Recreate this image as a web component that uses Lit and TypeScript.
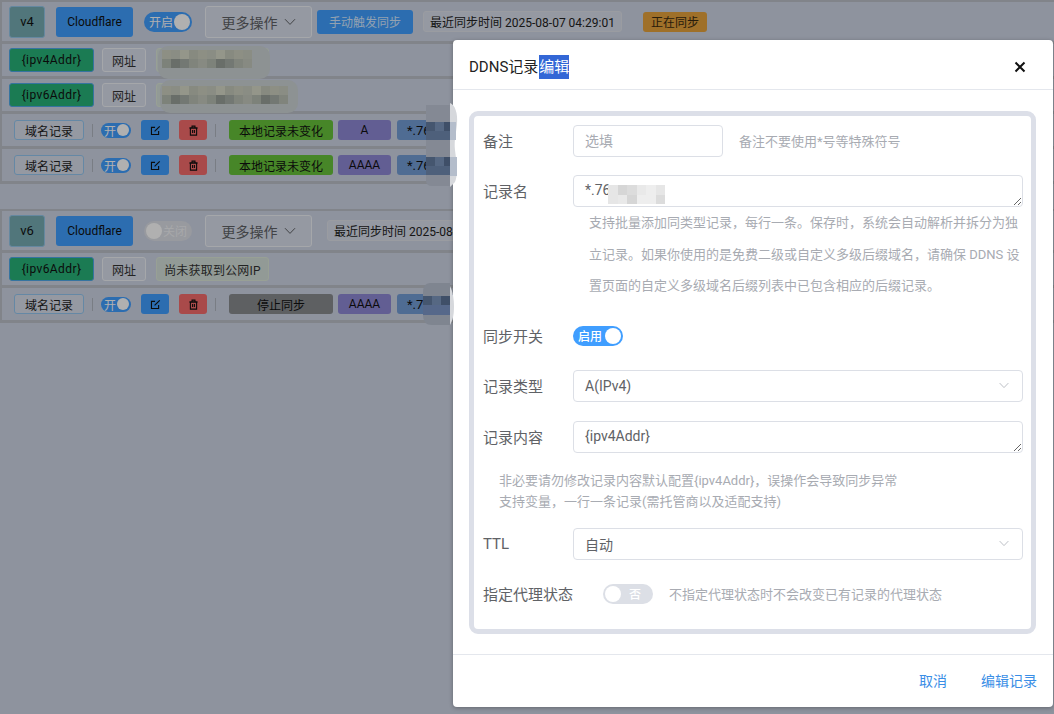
import { LitElement, html, css, svg } from "lit";
import { customElement } from "lit/decorators.js";

const editIcon = html`<svg class="ico" viewBox="0 0 12 12" fill="none" stroke="currentColor" stroke-width="1.2">
  <path d="M9.4 6.5V10.4H1.6V2.6H5.5" />
  <path d="M5 7L10.6 1.4" />
</svg>`;

const trashIcon = html`<svg class="ico" viewBox="0 0 12 12" fill="none" stroke="currentColor" stroke-width="1.2">
  <path d="M2.6 3.2H9.4V11H2.6Z" />
  <path d="M1.4 3.2H10.6M4.4 3V1.2H7.6V3M5 5.4V8.8M7 5.4V8.8" />
</svg>`;

const chevron = html`<svg class="chev" viewBox="0 0 12 8" fill="none" stroke="currentColor" stroke-width="1">
  <path d="M1 1.2L6 6.4L11 1.2" />
</svg>`;

// mosaic cells used to hide addresses, tones are just a repeating pattern
function cells(x: number, y: number, cols: number, rows: number, cell: number, tones: string[]) {
  const rects = [];
  for (let r = 0; r < rows; r++) {
    for (let c = 0; c < cols; c++) {
      const tone = tones[(c * 3 + r * 5 + ((c * r) % 4)) % tones.length];
      rects.push(svg`<rect x=${x + c * cell} y=${y + r * cell} width=${cell} height=${cell} fill=${tone} />`);
    }
  }
  return rects;
}

const greyTop = ["#8d8f84", "#878a80", "#94968a", "#8a8d84"];
const greyBottom = ["#7d827a", "#737873", "#878a82", "#696e69", "#80847c"];
const blueTones = ["#45566f", "#4e607b", "#3f4f68", "#566883"];
const lightTones = ["#e6e6e6", "#dcdcdc", "#eeeeee", "#d6d6d6", "#e9e9e9"];

@customElement("app-root")
export class AppRoot extends LitElement {
  static styles = css`
    :host {
      display: block;
      position: relative;
      width: 1054px;
      height: 714px;
      overflow: hidden;
      background: #ced5e5;
      font-family: Roboto, "Noto Sans CJK SC", sans-serif;
      font-size: 12px;
      color: #111;
    }

    /* ---- page behind the dialog ---- */
    .group {
      border: solid #bcc0c8;
      border-width: 2px 0 0 2px;
    }
    .group.second {
      margin-top: 25px;
    }
    .row {
      display: flex;
      align-items: center;
      border-bottom: 3px solid #bcc0c8;
      padding-left: 7px;
      height: 32px;
      white-space: nowrap;
    }
    .row.head {
      height: 39px;
    }
    .row.sub {
      padding-left: 12px;
    }
    .box {
      display: flex;
      align-items: center;
      justify-content: center;
      box-sizing: border-box;
      border-radius: 3px;
      flex: none;
    }
    .ver {
      width: 36px;
      height: 32px;
      background: #76abb2;
      border: 1px solid #93c6e8;
      font-size: 13px;
    }
    .cf {
      width: 77px;
      height: 30px;
      margin-left: 11px;
      background: #409eff;
    }
    .sw {
      position: relative;
      display: flex;
      align-items: center;
      box-sizing: border-box;
      flex: none;
      border-radius: 20px;
      color: #fff;
    }
    .sw .knob {
      position: absolute;
      border-radius: 50%;
      background: #fff;
    }
    .sw.main {
      width: 48px;
      height: 20px;
      margin-left: 11px;
      padding-left: 5px;
      background: #409eff;
    }
    .sw.main .knob {
      width: 16px;
      height: 16px;
      top: 2px;
      right: 2px;
    }
    .sw.main.off {
      background: #dcdfe6;
      padding-left: 19px;
      color: #f2f3f6;
    }
    .sw.main.off .knob {
      left: 2px;
      right: auto;
    }
    .more {
      width: 107px;
      height: 32px;
      margin-left: 13px;
      gap: 6px;
      background: #d8deeb;
      border: 1px solid #f0f2f6;
      font-size: 14px;
      color: #606266;
    }
    .more .chev {
      width: 12px;
      height: 8px;
      color: #606266;
    }
    .sync {
      width: 96px;
      height: 24px;
      margin-left: 5px;
      background: #409eff;
      color: #d5e9ff;
    }
    .time {
      width: 199px;
      height: 21px;
      margin-left: 10px;
      background: #d8deeb;
      border: 1px solid #dfe3ea;
      color: #222;
    }
    .time.shifted {
      margin-left: 15px;
    }
    .state {
      width: 64px;
      height: 20px;
      margin-left: 21px;
      background: #e6a23c;
      color: #3a2a10;
    }
    .var {
      width: 85px;
      height: 24px;
      background: #28b279;
      border: 1px solid #4fa8e8;
      letter-spacing: 0.4px;
    }
    .url {
      width: 44px;
      height: 24px;
      margin-left: 8px;
      background: #d8deeb;
      border: 1px solid #f0f2f6;
      color: #333;
    }
    .addr {
      width: 113px;
      height: 24px;
      margin-left: 10px;
      background: #d4e0da;
      border: 1px solid #dde8d8;
      color: #333;
      letter-spacing: 0.2px;
    }
    .addr.long {
      width: 140px;
    }
    .rec {
      width: 70px;
      height: 20px;
      background: #d8deeb;
      border: 1px solid #93c6f0;
      color: #222;
    }
    .sep {
      width: 1px;
      height: 13px;
      margin-left: 8px;
      background: #b0b5bf;
      flex: none;
    }
    .sw.mini {
      width: 30px;
      height: 15px;
      margin-left: 8px;
      padding-left: 3px;
      background: #409eff;
      font-size: 12px;
    }
    .sw.mini .knob {
      width: 12px;
      height: 12px;
      top: 1.5px;
      right: 2px;
    }
    .icon-btn {
      width: 28px;
      height: 20px;
      margin-left: 10px;
      background: #409eff;
    }
    .icon-btn.del {
      background: #f56c6c;
    }
    .ico {
      width: 11px;
      height: 11px;
    }
    .sep.wide + .pill {
      margin-left: 13px;
    }
    .pill {
      height: 20px;
      margin-left: 5px;
    }
    .pill.ok {
      width: 104px;
      background: #67c23a;
    }
    .pill.stop {
      width: 104px;
      background: #888b8f;
    }
    .pill.type {
      width: 53px;
      margin-left: 5px;
      background: #8f88d6;
    }
    .pill.name {
      width: 80px;
      margin-left: 6px;
      background: #739dd6;
      justify-content: flex-start;
      padding-left: 10px;
      font-size: 13px;
    }

    /* ---- dimming and dialog ---- */
    .overlay {
      position: absolute;
      inset: 0;
      background: rgba(0, 0, 0, 0.31);
    }
    /* censor smears sit on top of everything, one svg covering the window */
    .smears {
      position: absolute;
      left: 0;
      top: 0;
      width: 1054px;
      height: 714px;
      pointer-events: none;
    }
    .dialog {
      position: absolute;
      left: 453px;
      top: 40px;
      width: 600px;
      height: 667px;
      display: flex;
      flex-direction: column;
      background: #fff;
      border-radius: 4px;
      box-shadow: 0 1px 4px rgba(0, 0, 0, 0.3);
      color: #606266;
    }
    .dlg-head {
      display: flex;
      align-items: center;
      justify-content: space-between;
      box-sizing: border-box;
      height: 50px;
      padding: 4px 26px 0 16px;
      border-bottom: 1px solid #e4e7ed;
      font-size: 15px;
      color: #222;
    }
    .selected {
      background: #3367d6;
      color: #fff;
      display: inline-block;
      line-height: 24px;
      margin-left: 1px;
    }
    .close {
      width: 14px;
      height: 14px;
      color: #111;
    }
    .dlg-body {
      flex: 1;
      padding: 21px 17px 0 16px;
    }
    .form {
      box-sizing: border-box;
      height: 523px;
      border: 5px solid #dcdfe8;
      border-radius: 9px;
      padding: 9px 8px 0 9px;
      font-size: 14px;
    }
    .field {
      display: flex;
      align-items: center;
    }
    .label {
      width: 90px;
      flex: none;
      font-size: 15px;
      color: #606266;
    }
    .label.up,
    .hint.up {
      padding-bottom: 2px;
    }
    .label.auto {
      width: auto;
      margin-right: 30px;
    }
    .hint {
      font-size: 13px;
      color: #a8abb2;
    }
    .input,
    .area,
    .select {
      box-sizing: border-box;
      height: 32px;
      border: 1px solid #dcdfe6;
      border-radius: 4px;
      font: inherit;
      font-size: 14px;
      color: #606266;
      background: #fff;
      outline: none;
      padding: 0 11px;
    }
    .input {
      width: 150px;
      margin-right: 16px;
    }
    .input::placeholder {
      color: #a8abb2;
    }
    .area {
      display: block;
      width: 450px;
      padding-top: 4px;
      line-height: 20px;
      resize: vertical;
    }
    .select {
      display: flex;
      align-items: center;
      justify-content: space-between;
      width: 450px;
      padding-right: 12px;
    }
    .select .chev {
      width: 12px;
      height: 7px;
      color: #b4b7be;
    }
    .name-help {
      margin: 0 0 0 106px;
      width: 434px;
      line-height: 31.5px;
    }
    .f-name {
      margin-top: 18px;
    }
    .f-sync {
      margin-top: 24px;
      height: 20px;
    }
    .f-type {
      margin-top: 24px;
    }
    .f-content {
      margin-top: 19px;
    }
    .content-help {
      margin: 17px 0 0 16px;
      line-height: 21px;
    }
    .f-ttl {
      margin-top: 16px;
    }
    .f-proxy {
      margin-top: 24px;
      height: 20px;
    }
    .form-sw {
      width: 50px;
      height: 20px;
      background: #409eff;
      font-size: 12px;
      font-weight: 500;
      padding-left: 5px;
    }
    .form-sw .knob {
      width: 16px;
      height: 16px;
      top: 2px;
      right: 2px;
    }
    .form-sw.off {
      background: #dcdfe6;
      padding-left: 26px;
      margin-right: 16px;
    }
    .form-sw.off .knob {
      left: 2px;
      right: auto;
    }
    .dlg-foot {
      display: flex;
      justify-content: flex-end;
      align-items: center;
      gap: 34px;
      box-sizing: border-box;
      height: 53px;
      padding: 0 16px 2px 0;
      border-top: 1px solid #e4e7ed;
      font-size: 14px;
      color: #3a8ee6;
    }
  `;

  private recordRow(status: string, statusClass: string, type: string) {
    return html`<div class="row sub">
      <div class="box rec">域名记录</div>
      <span class="sep"></span>
      <div class="sw mini">开<span class="knob"></span></div>
      <div class="box icon-btn">${editIcon}</div>
      <div class="box icon-btn del">${trashIcon}</div>
      <span class="sep wide"></span>
      <div class="box pill ${statusClass}">${status}</div>
      <div class="box pill type">${type}</div>
      <div class="box pill name">*.76</div>
    </div>`;
  }

  render() {
    return html`
      <div class="group">
        <div class="row head">
          <div class="box ver">v4</div>
          <div class="box cf">Cloudflare</div>
          <div class="sw main">开启<span class="knob"></span></div>
          <div class="box more">更多操作 ${chevron}</div>
          <div class="box sync">手动触发同步</div>
          <div class="box time">最近同步时间 2025-08-07 04:29:01</div>
          <div class="box state">正在同步</div>
        </div>
        <div class="row">
          <div class="box var">{ipv4Addr}</div>
          <div class="box url">网址</div>
          <div class="box addr"></div>
        </div>
        <div class="row">
          <div class="box var">{ipv6Addr}</div>
          <div class="box url">网址</div>
          <div class="box addr long"></div>
        </div>
        ${this.recordRow("本地记录未变化", "ok", "A")}
        ${this.recordRow("本地记录未变化", "ok", "AAAA")}
      </div>

      <div class="group second">
        <div class="row head">
          <div class="box ver">v6</div>
          <div class="box cf">Cloudflare</div>
          <div class="sw main off">关闭<span class="knob"></span></div>
          <div class="box more">更多操作 ${chevron}</div>
          <div class="box time shifted">最近同步时间 2025-08-07 04:29:01</div>
        </div>
        <div class="row">
          <div class="box var">{ipv6Addr}</div>
          <div class="box url">网址</div>
          <div class="box addr">尚未获取到公网IP</div>
        </div>
        ${this.recordRow("停止同步", "stop", "AAAA")}
      </div>

      <div class="overlay"></div>

      <div class="dialog">
        <div class="dlg-head">
          <span>DDNS记录<span class="selected">编辑</span></span>
          <svg class="close" viewBox="0 0 14 14" stroke="currentColor" stroke-width="2" fill="none">
            <path d="M2.5 2.5L11.5 11.5M11.5 2.5L2.5 11.5" />
          </svg>
        </div>
        <div class="dlg-body">
          <div class="form">
            <div class="field">
              <span class="label up">备注</span>
              <input class="input" placeholder="选填" />
              <span class="hint up">备注不要使用*号等特殊符号</span>
            </div>
            <div class="field f-name">
              <span class="label up">记录名</span>
              <textarea class="area">*.76</textarea>
            </div>
            <p class="hint name-help">
              支持批量添加同类型记录，每行一条。保存时，系统会自动解析并拆分为独立记录。如果你使用的是免费二级或自定义多级后缀域名，请确保 DDNS 设置页面的自定义多级域名后缀列表中已包含相应的后缀记录。
            </p>
            <div class="field f-sync">
              <span class="label">同步开关</span>
              <div class="sw form-sw">启用<span class="knob"></span></div>
            </div>
            <div class="field f-type">
              <span class="label">记录类型</span>
              <div class="select">A(IPv4) ${chevron}</div>
            </div>
            <div class="field f-content">
              <span class="label">记录内容</span>
              <textarea class="area">{ipv4Addr}</textarea>
            </div>
            <div class="hint content-help">
              非必要请勿修改记录内容默认配置{ipv4Addr}，误操作会导致同步异常<br />
              支持变量，一行一条记录(需托管商以及适配支持)
            </div>
            <div class="field f-ttl">
              <span class="label">TTL</span>
              <div class="select">自动 ${chevron}</div>
            </div>
            <div class="field f-proxy">
              <span class="label auto">指定代理状态</span>
              <div class="sw form-sw off">否<span class="knob"></span></div>
              <span class="hint">不指定代理状态时不会改变已有记录的代理状态</span>
            </div>
          </div>
        </div>
        <div class="dlg-foot">
          <span>取消</span>
          <span>编辑记录</span>
        </div>
      </div>

      <svg class="smears" viewBox="0 0 1054 714">
        <rect x="158" y="46" width="112" height="33" rx="10" fill="#8d9293" />
        <rect x="160" y="80" width="138" height="33" rx="10" fill="#8d9293" />
        <g shape-rendering="crispEdges">
          ${cells(162, 50, 10, 1, 9, greyTop)}
          ${cells(162, 59, 10, 1, 9, greyBottom)}
          ${cells(162, 86, 14, 1, 9, greyTop)}
          ${cells(162, 95, 14, 1, 9, greyBottom)}
        </g>

        <path d="M426 105H452V186H432Q426 186 426 180Z" fill="#848994" />
        <g shape-rendering="crispEdges">
          ${cells(426, 122, 3, 2, 9, blueTones)}
          ${cells(426, 157, 3, 2, 9, blueTones)}
        </g>
        <path d="M450 103C455 105 458 113 457 124C456 134 454 140 455 150C457 165 458 175 455 182L450 187Z" fill="#d6d8dc" />
        <rect x="450" y="122" width="6" height="18" fill="#b4bdcb" />
        <rect x="450" y="157" width="7" height="19" fill="#b4bdcb" />

        <path d="M430 283H450V325H432Q423 325 423 315V293Q423 283 430 283Z" fill="#7f8590" />
        <g shape-rendering="crispEdges">
          ${cells(423, 296, 3, 1, 9, blueTones)}
          <rect x="423" y="305" width="27" height="10" fill="#56688a" />
        </g>
        <path d="M450 286C453 292 454 300 454 306C454 314 453 320 450 325Z" fill="#d6d8dc" />

        <g shape-rendering="crispEdges">${cells(608, 185, 6, 2, 9.5, lightTones)}</g>
      </svg>
    `;
  }
}
